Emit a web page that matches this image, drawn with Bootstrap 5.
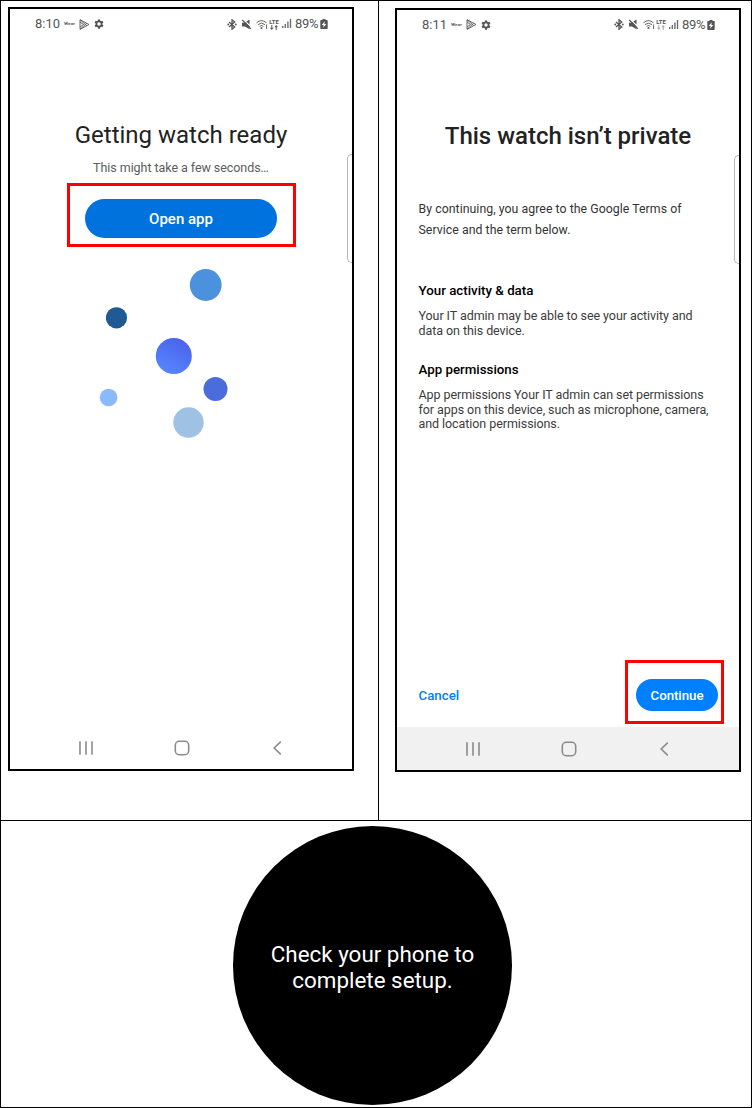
<!DOCTYPE html>
<html lang="en">
<head>
<meta charset="utf-8">
<meta name="viewport" content="width=device-width, initial-scale=1">
<title>Watch setup</title>
<link href="https://cdn.jsdelivr.net/npm/bootstrap@5.3.0/dist/css/bootstrap.min.css" rel="stylesheet">
<style>
body{font-family:Roboto,"Liberation Sans",sans-serif;background:#fff;color:#222}
.sheet{width:752px;height:1108px;border:1px solid #000}
.steps{height:820px;border-bottom:1px solid #000}
.step-a{width:378px;border-right:1px solid #000;padding:6px 0 0 7px}
.step-b{padding:7px 0 0 16px}
.phone{width:346px;height:764px;border:2px solid #000}
.edge{right:0;top:145px;width:5px;height:109px;border:1px solid #b5b5b5;border-right:0;border-radius:5px 0 0 5px}
.status{height:30px;padding:0 24px 0 25px;color:#555;font-size:13px;line-height:30px}
.status svg{display:block;flex:none}
.private .status{padding-bottom:1px}
.clock{width:29px}
.wear{width:15px}
.wear span{display:block;width:11px;font-size:4.8px;font-weight:700;line-height:30px;transform:scaleY(.85);color:#666}
.pct{width:25px;margin-left:3px;letter-spacing:-.3px}
.lte{width:10px;margin-left:1px;line-height:6px}
.lte b{font-size:6px}
.lte.dim svg{opacity:.5}
.title{font-size:24px;line-height:30px;margin-top:81px;font-weight:400}
.sub{font-size:12.5px;line-height:18px;margin-top:9px;color:#5c5c5c;letter-spacing:-.06px}
.mark-box{border:3px solid #f00}
.mark-open{width:229px;height:64px;margin:6px 0 0 57px;padding:13px 0 0 15px}
.fw-mid{font-weight:500}
.btn-open{width:192px;height:39px;background:#0072de;font-size:15px;line-height:40px}
.dots{margin:18px 0 0 85px}
.softkeys{height:43px;color:#8b8b8b;padding-left:69px}
.softkeys svg{display:block}
.softkeys svg:nth-child(2){margin-left:81px}
.softkeys svg:nth-child(3){margin-left:83px}
.shade{background:#f1f1f1}
.private .title{font-weight:500}
.copy{padding-left:21.5px}
.terms{margin-top:48px;font-size:12.3px;line-height:21px;color:#333;letter-spacing:.05px}
.copy h2{font-size:13.3px;line-height:18px;font-weight:500;color:#000}
.copy .detail{font-size:12.5px;line-height:14.6px;color:#3c3c3c;padding-top:9px;letter-spacing:-.07px}
.gap-a{margin-top:41px}
.gap-b{margin-top:23px}
.actions{margin-bottom:3px}
.cancel{font-size:13.3px;color:#007eff;margin-top:25px;padding-left:21.5px;line-height:21px}
.mark-next{width:99px;height:64px;margin-right:15px;padding:16px 0 0 8px}
.btn-next{width:82px;height:32px;background:#007fff;font-size:13.3px;line-height:33px;letter-spacing:-.05px}
.watch{width:279px;height:279px;margin:5px 0 0 232px;padding-top:2px;background:#000;font-size:22.4px;line-height:26px;color:#fff}
</style>
</head>
<body>
<svg width="0" height="0" class="position-absolute" aria-hidden="true">
  <symbol id="play" viewBox="0 0 11 11"><path d="M1 .7v9.600l9-4.800zM1 .7l6.700 6M1 10.300l6.700-6M1 3l3.500 2.500L1 8" fill="none" stroke="currentColor" stroke-width=".9" stroke-linejoin="round"/></symbol>
  <symbol id="gear" viewBox="0 0 24 24"><path fill="currentColor" fill-rule="evenodd" d="M9.500 1h5l.6 3.200 1.900 1.100 3.100-1.100 2.500 4.300-2.500 2.100v2.800l2.500 2.100-2.500 4.300-3.100-1.100-1.900 1.100-.6 3.300h-5l-.6-3.300L7 18.700l-3.100 1.100-2.500-4.300 2.500-2.100v-2.800L1.400 8.500l2.500-4.300L7 5.300l1.900-1.100zM12 7.900a4.100 4.100 0 1 0 0 8.200 4.100 4.100 0 0 0 0-8.200z"/></symbol>
  <symbol id="bt" viewBox="0 0 10 11"><path d="M2 3l5.700 5L5 10.200V.8L7.700 3 2 8" fill="none" stroke="currentColor" stroke-width="1.300"/><circle cx="1.200" cy="5.500" r=".9" fill="currentColor"/><circle cx="8.800" cy="5.500" r=".9" fill="currentColor"/></symbol>
  <symbol id="mute" viewBox="0 0 10 11"><path d="M.5 3.800h2l1.300-.8L8 7.300v3L3.500 7.500h-3zM4.800 2.600L8 .6v5z" fill="currentColor"/><path d="M.8 1l8.600 8.800" stroke="currentColor" stroke-width="1.200"/></symbol>
  <symbol id="wifi" viewBox="0 0 12 11"><g fill="none" stroke="currentColor" stroke-width=".9"><path d="M.5 3.800Q5.500-.6 10.500 3.800M2 5.600q3.500-3 7 0M3.600 7.300q1.900-1.600 3.800 0"/><path d="M10.600 5.500V10"/></g><circle cx="5.500" cy="9" r="1" fill="currentColor"/></symbol>
  <symbol id="arrows" viewBox="0 0 8 5"><path d="M0 2.700h1.300V0h1v2.700h1.300L1.800 5zM4.400 2.300L6.200 0 8 2.300H6.700V5h-1V2.300z" fill="currentColor"/></symbol>
  <symbol id="signal" viewBox="0 0 10 10"><path d="M0 7h1.400v2H0zM2.600 5H4v4H2.600zM5.200 2.500h1.400V9H5.200zM7.800 0h1.400v9H7.800z" fill="currentColor" opacity=".85"/></symbol>
  <symbol id="battery" viewBox="0 0 8 10"><path fill="currentColor" fill-rule="evenodd" d="M2.500 0h3v1H7q.7 0 .7.700v7.600q0 .7-.7.700H1q-.7 0-.7-.7V1.700Q.3 1 1 1h1.500zM4.700 2.300L1.800 6h1.800l-.3 2.700L6.200 5H4.400z"/></symbol>
  <symbol id="recent" viewBox="0 0 14 14"><path d="M1 .3v13.400M7 .3v13.400M13 .3v13.400" stroke="currentColor" stroke-width="1.600"/></symbol>
  <symbol id="home" viewBox="0 0 16 16"><rect x="1.300" y="1.300" width="13.400" height="13.400" rx="4" fill="none" stroke="currentColor" stroke-width="1.600"/></symbol>
  <symbol id="back" viewBox="0 0 9 14"><path d="M7.800.7L1.200 7l6.600 6.300" fill="none" stroke="currentColor" stroke-width="1.600"/></symbol>
</svg>
<main class="sheet">
  <div class="steps d-flex">
    <section class="step-a">
      <div class="phone position-relative d-flex flex-column">
        <div class="status d-flex align-items-center">
          <span class="clock">8:10</span><span class="wear"><span>Wear</span></span>
          <svg width="11" height="11"><use href="#play"/></svg>
          <svg class="ms-1" width="10" height="10"><use href="#gear"/></svg>
          <svg class="ms-auto" width="10" height="11"><use href="#bt"/></svg>
          <svg class="ms-1 me-1" width="11" height="11"><use href="#mute"/></svg>
          <svg width="12" height="11"><use href="#wifi"/></svg>
          <span class="lte d-flex flex-column align-items-center"><b>LTE</b><svg width="8" height="5"><use href="#arrows"/></svg></span>
          <svg width="13" height="10" viewBox="-3 0 13 10"><use href="#signal" width="10" height="10"/></svg>
          <span class="pct">89%</span>
          <svg width="8" height="10"><use href="#battery"/></svg>
        </div>
        <h1 class="title text-center mb-0">Getting watch ready</h1>
        <p class="sub text-center mb-0">This might take a few seconds…</p>
        <div class="mark-box mark-open"><button class="btn btn-open rounded-pill border-0 p-0 text-white fw-mid d-block">Open app</button></div>
        <svg class="dots" width="140" height="176" viewBox="95 265 140 176">
          <defs><linearGradient id="core" x1=".75" y1="0" x2=".25" y2="1"><stop stop-color="#4b61eb"/><stop offset="1" stop-color="#5688ff"/></linearGradient></defs>
          <circle cx="205.700" cy="285" r="15.900" fill="#4c91dd"/><circle cx="116.500" cy="317.800" r="10.600" fill="#205a94"/>
          <circle cx="173.800" cy="356" r="18" fill="url(#core)"/><circle cx="108.600" cy="397.500" r="8.800" fill="#8ab9fe"/>
          <circle cx="215.500" cy="389" r="12" fill="#4b6cdb"/><circle cx="188.500" cy="422.500" r="15.200" fill="#9fc1e4"/>
        </svg>
        <div class="softkeys d-flex align-items-center mt-auto">
          <svg width="14" height="14"><use href="#recent"/></svg><svg width="16" height="16"><use href="#home"/></svg><svg width="9" height="14"><use href="#back"/></svg>
        </div>
        <span class="edge position-absolute"></span>
      </div>
    </section>
    <section class="step-b">
      <div class="phone private position-relative d-flex flex-column">
        <div class="status d-flex align-items-center">
          <span class="clock">8:11</span><span class="wear"><span>Wear</span></span>
          <svg width="11" height="11"><use href="#play"/></svg>
          <svg class="ms-1" width="10" height="10"><use href="#gear"/></svg>
          <svg class="ms-auto" width="10" height="11"><use href="#bt"/></svg>
          <svg class="ms-1 me-1" width="11" height="11"><use href="#mute"/></svg>
          <svg width="12" height="11"><use href="#wifi"/></svg>
          <span class="lte dim d-flex flex-column align-items-center"><b>LTE</b><svg width="8" height="5"><use href="#arrows"/></svg></span>
          <svg width="13" height="10" viewBox="-3 0 13 10"><use href="#signal" width="10" height="10"/></svg>
          <span class="pct">89%</span>
          <svg width="8" height="10"><use href="#battery"/></svg>
        </div>
        <h1 class="title text-center mb-0">This watch isn’t private</h1>
        <div class="copy">
          <p class="terms mb-0">By continuing, you agree to the Google Terms of<br>Service and the term below.</p>
          <h2 class="gap-a mb-0">Your activity &amp; data</h2>
          <p class="detail mb-0">Your IT admin may be able to see your activity and<br>data on this device.</p>
          <h2 class="gap-b mb-0">App permissions</h2>
          <p class="detail mb-0">App permissions Your IT admin can set permissions<br>for apps on this device, such as microphone, camera,<br>and location permissions.</p>
        </div>
        <div class="actions d-flex justify-content-between mt-auto">
          <a class="cancel fw-mid text-decoration-none" href="#">Cancel</a>
          <div class="mark-box mark-next"><button class="btn btn-next rounded-pill border-0 p-0 text-white fw-mid d-block">Continue</button></div>
        </div>
        <div class="softkeys shade d-flex align-items-center">
          <svg width="14" height="14"><use href="#recent"/></svg><svg width="16" height="16"><use href="#home"/></svg><svg width="9" height="14"><use href="#back"/></svg>
        </div>
        <span class="edge position-absolute"></span>
      </div>
    </section>
  </div>
  <div class="watch rounded-circle d-flex align-items-center justify-content-center text-center"><div>Check your phone to<br>complete setup.</div></div>
</main>
<script src="https://cdn.jsdelivr.net/npm/bootstrap@5.3.0/dist/js/bootstrap.bundle.min.js"></script>
</body>
</html>
